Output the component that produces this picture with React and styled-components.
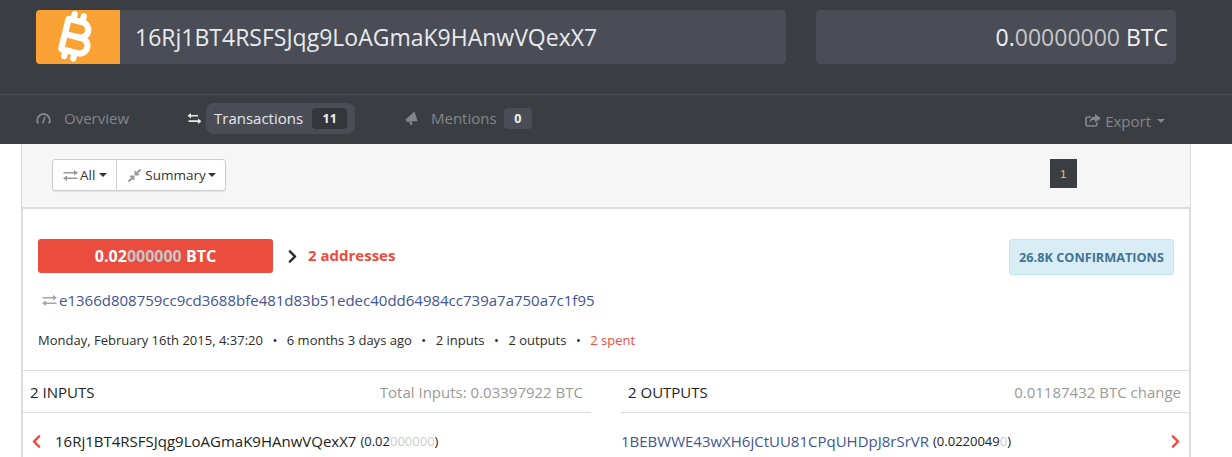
import React from "react";
import styled, { createGlobalStyle } from "styled-components";
import { FaCompressAlt, FaChevronLeft, FaChevronRight } from "react-icons/fa";
import { FaBitcoinSign } from "react-icons/fa6";

const Global = createGlobalStyle`
  html, body { margin: 0; padding: 0; background: #fff; }
  body { font-family: "Open Sans", "DejaVu Sans", sans-serif; width: 1232px; height: 457px; overflow: hidden; color: #222; }
`;

const Header = styled.header`
  background: #3a3d42;
  height: 94px;
  padding: 10px 56px 0 36px;
  box-sizing: border-box;
  display: flex;
  gap: 30px;
  align-items: flex-start;
`;
const AddressBar = styled.div`
  width: 750px;
  height: 54px;
  background: #4a4d56;
  border-radius: 4px;
  display: flex;
  align-items: center;
  overflow: hidden;
`;
const Logo = styled.div`
  width: 84px;
  height: 54px;
  flex: none;
  background: radial-gradient(circle at 50% 50%, #faa233 0, #faa233 48px, #f8982b 49px);
  display: flex;
  align-items: center;
  justify-content: center;
  color: #fff;
  font-size: 50px;
  svg { transform: rotate(14deg); margin-left: -2px; margin-top: -1px; }
`;
const Address = styled.div`
  margin-left: 15px;
  font-size: 23px;
  color: #e8ebf0;
  white-space: nowrap;
`;
const Balance = styled.div`
  width: 360px;
  height: 54px;
  background: #4a4d56;
  border-radius: 4px;
  display: flex;
  align-items: center;
  justify-content: flex-end;
  padding-right: 8px;
  box-sizing: border-box;
  font-size: 23px;
  color: #f0f2f5;
  white-space: nowrap;
`;
const Faint = styled.span`
  color: ${(p) => p.$color || "#c4c6c9"};
`;
const Nav = styled.nav`
  height: 50px;
  box-sizing: border-box;
  background: #3a3d42;
  border-top: 1px solid #4b4e55;
  display: flex;
  align-items: center;
  padding: 0 68px 3px 36px;
  font-size: 15px;
  color: #83858a;
`;
const NavItem = styled.div`
  display: flex;
  align-items: center;
  width: ${(p) => p.$w}px;
  flex: none;
`;
const NavIcon = styled.span`
  display: inline-flex;
  width: ${(p) => p.$w || 28}px;
  flex: none;
  color: ${(p) => (p.$on ? "#e8e8e8" : "#83858a")};
`;
const ActivePill = styled.div`
  display: flex;
  align-items: center;
  height: 31px;
  padding: 0 8px;
  background: #4a4d56;
  border-radius: 8px;
  color: #e6e8ec;
  margin-left: -10px;
`;
const Count = styled.span`
  display: inline-block;
  height: 21px;
  line-height: 21px;
  border-radius: 4px;
  padding: 0 10.5px;
  margin-left: ${(p) => (p.$small ? 7 : 9)}px;
  background: ${(p) => (p.$small ? "#4a4d56" : "#33363b")};
  color: #f0f0f0;
  font-size: 12.5px;
  font-weight: 700;
`;
const Export = styled.div`
  margin-left: auto;
  display: flex;
  align-items: center;
  gap: 4px;
  color: #84868a;
  margin-top: 5px;
  margin-right: -1px;
`;
const Caret = styled.i`
  display: inline-block;
  width: 0;
  height: 0;
  border-left: 4px solid transparent;
  border-right: 4px solid transparent;
  border-top: 4px solid currentColor;
  margin-left: ${(p) => p.$gap ?? 2}px;
`;
const Toolbar = styled.div`
  margin-left: 21px;
  width: 1170px;
  height: 63px;
  box-sizing: border-box;
  background: #f6f6f6;
  border-left: 1px solid #ddd;
  border-right: 1px solid #ddd;
  display: flex;
  align-items: flex-start;
  padding: 15px 0 0 30px;
`;
const BtnGroup = styled.div`
  display: flex;
  height: 32px;
  box-sizing: border-box;
  background: #fff;
  border: 1px solid #ccc;
  border-radius: 3px;
  box-shadow: 0 1px 1px rgba(0,0,0,.08);
  font-size: 13.5px;
  color: #333;
`;
const Btn = styled.div`
  display: flex;
  align-items: center;
  padding: 0 9px 0 10px;
  gap: ${(p) => p.$gap || 3}px;
  & + & { border-left: 1px solid #ccc; }
  > svg { color: #999; flex: none; }
`;
const Pager = styled.div`
  margin-left: 824px;
  width: 27px;
  height: 29px;
  background: #3a3d42;
  color: #f2c26a;
  font-size: 11px;
  display: flex;
  align-items: center;
  justify-content: center;
  font-family: "Liberation Sans", sans-serif;
`;
const Card = styled.section`
  margin-left: 21px;
  width: 1170px;
  box-sizing: border-box;
  background: #fff;
  border: 2px solid #dcdcdc;
  border-bottom: none;
  height: 251px;
`;
const Summary = styled.div`
  padding: 30px 15px 0 15px;
  height: 162px;
  box-sizing: border-box;
  border-bottom: 1px solid #dcdcdc;
`;
const AmountRow = styled.div`
  display: flex;
  align-items: flex-start;
`;
const Amount = styled.div`
  width: 235px;
  height: 34px;
  background: #ea4c3e;
  border-radius: 3px;
  color: #fff;
  font-size: 16px;
  font-weight: 700;
  display: flex;
  align-items: center;
  justify-content: center;
  white-space: pre;
`;
const Arrow = styled.span`
  display: inline-flex;
  margin: 10px 8px 0 12px;
  font-size: 15px;
  color: #2a2c30;
`;
const Addresses = styled.span`
  margin-top: 6px;
  color: #ea4c3e;
  font-size: 15px;
  font-weight: 700;
`;
const Confirm = styled.div`
  margin-left: auto;
  width: 165px;
  height: 36px;
  box-sizing: border-box;
  background: #d9edf7;
  border: 1px solid #bce8f1;
  border-radius: 3px;
  color: #3f7590;
  font-size: 12.7px;
  font-weight: 700;
  display: flex;
  align-items: center;
  justify-content: center;
  white-space: nowrap;
`;
const HashRow = styled.div`
  display: flex;
  align-items: center;
  margin: 15px 0 0 4px;
  font-size: 15px;
  color: #41558f;
  line-height: 20px;
  > svg { color: #a5a5a5; margin-right: 2px; }
`;
const Meta = styled.div`
  margin-top: 20px;
  font-size: 13px;
  line-height: 20px;
  color: #2c2c2c;
  white-space: pre;
`;
const Spent = styled.span`
  color: #ea4c3e;
`;
const Sep = styled.span`
  margin: 0 9.5px;
`;
const Columns = styled.div`
  display: flex;
`;
const Col = styled.div`
  flex: none;
  width: ${(p) => p.$w}px;
  margin-left: ${(p) => p.$ml || 0}px;
`;
const ColHead = styled.div`
  height: 41px;
  display: flex;
  align-items: center;
  justify-content: space-between;
  padding: 0 ${(p) => p.$pr}px 0 ${(p) => p.$pl}px;
  border-bottom: 1px solid #dcdcdc;
  font-size: 15px;
  color: #222;
`;
const Muted = styled.span`
  color: #999;
`;
const IORow = styled.div`
  display: flex;
  align-items: center;
  height: 56px;
  font-size: 15px;
  white-space: nowrap;
  color: ${(p) => p.$color || "#222"};
`;
const Chevron = styled.span`
  display: inline-flex;
  color: #ea4c3e;
  font-size: 15px;
  ${(p) => (p.$right ? "margin-left: auto; margin-right: 6px;" : "margin: 0 11px 0 6px;")}
`;
const Small = styled.span`
  font-size: 13px;
  color: #222;
  margin-left: 4px;
`;

function Gauge() {
  return (
    <svg width="15" height="11" viewBox="0 0 15 11" fill="none" stroke="currentColor" strokeWidth="2">
      <path d="M2.2 10.5 A6.2 6.2 0 1 1 12.8 10.5" />
      <path d="M6.5 10.5 L9 4" strokeWidth="1.8" />
    </svg>
  );
}

function Exchange({ bold }) {
  return (
    <svg width="15" height="11" viewBox="0 0 15 11" fill="currentColor">
      <path d={bold
        ? "M4 0 V2 H11 V3.6 H4 V5.5 L0.5 2.8 Z M11 5.5 V7.3 H1.5 V9 H11 V11 L14.5 8.2 Z"
        : "M11 0 L15 2.8 L11 5.5 V3.6 H0.5 V2 H11 Z M4 5.5 V7.4 H14.5 V9 H4 V11 L0 8.2 Z"} />
    </svg>
  );
}

function Bullhorn() {
  return (
    <svg width="13" height="14" viewBox="0 0 13 14" fill="currentColor">
      <path d="M0.5 8.5 L9.5 0.5 L12.5 10 L2 11 Z" />
      <path d="M4 11 L5.5 14 H7.5 L6.5 10.8 Z" />
    </svg>
  );
}

function ShareBox() {
  return (
    <svg width="16" height="13" viewBox="0 0 16 13" style={{ flex: "none" }}>
      <path d="M6 3 H2.5 a1.5 1.5 0 0 0 -1.5 1.5 V10.5 a1.5 1.5 0 0 0 1.5 1.5 H10.5 a1.5 1.5 0 0 0 1.5 -1.5 V8.5" fill="none" stroke="currentColor" strokeWidth="1.7" />
      <path d="M10 0 L16 4.3 L10 8.6 V6 C7.5 6 5.5 6.5 4.5 9 C4.5 5 7 2.8 10 2.6 Z" fill="currentColor" />
    </svg>
  );
}

export default function App() {
  return (
    <>
      <Global />
      <Header>
        <AddressBar>
          <Logo><FaBitcoinSign /></Logo>
          <Address>16Rj1BT4RSFSJqg9LoAGmaK9HAnwVQexX7</Address>
        </AddressBar>
        <Balance>0.<Faint>00000000</Faint>&nbsp;BTC</Balance>
      </Header>
      <Nav>
        <NavItem $w={151}><NavIcon><Gauge /></NavIcon>Overview</NavItem>
        <NavItem $w={218}>
          <NavIcon $on $w={29}><Exchange bold /></NavIcon>
          <ActivePill>Transactions<Count>11</Count></ActivePill>
        </NavItem>
        <NavItem $w={200}><NavIcon $w={26}><Bullhorn /></NavIcon>Mentions<Count $small>0</Count></NavItem>
        <Export><ShareBox />Export<Caret /></Export>
      </Nav>
      <Toolbar>
        <BtnGroup>
          <Btn $gap={2}><Exchange />All<Caret /></Btn>
          <Btn><FaCompressAlt size={15} />Summary<Caret $gap={-1} /></Btn>
        </BtnGroup>
        <Pager>1</Pager>
      </Toolbar>
      <Card>
        <Summary>
          <AmountRow>
            <Amount>0.02<Faint>000000</Faint> BTC</Amount>
            <Arrow><FaChevronRight /></Arrow>
            <Addresses>2 addresses</Addresses>
            <Confirm>26.8K CONFIRMATIONS</Confirm>
          </AmountRow>
          <HashRow><Exchange />e1366d808759cc9cd3688bfe481d83b51edec40dd64984cc739a7a750a7c1f95</HashRow>
          <Meta>
            Monday, February 16th 2015, 4:37:20<Sep>•</Sep>6 months 3 days ago<Sep>•</Sep>2 inputs<Sep>•</Sep>2 outputs<Sep>•</Sep><Spent>2 spent</Spent>
          </Meta>
        </Summary>
        <Columns>
          <Col $w={568}>
            <ColHead $pl={7} $pr={8}>2 INPUTS<Muted>Total Inputs: 0.03397922 BTC</Muted></ColHead>
            <IORow>
              <Chevron><FaChevronLeft /></Chevron>
              16Rj1BT4RSFSJqg9LoAGmaK9HAnwVQexX7
              <Small>(0.02<Faint $color="#ccc">000000</Faint>)</Small>
            </IORow>
          </Col>
          <Col $w={568} $ml={30}>
            <ColHead $pl={7} $pr={8}>2 OUTPUTS<Muted>0.01187432 BTC change</Muted></ColHead>
            <IORow $color="#41558f">
              1BEBWWE43wXH6jCtUU81CPqUHDpJ8rSrVR
              <Small>(0.0220049<Faint $color="#ccc">0</Faint>)</Small>
              <Chevron $right><FaChevronRight /></Chevron>
            </IORow>
          </Col>
        </Columns>
      </Card>
    </>
  );
}
